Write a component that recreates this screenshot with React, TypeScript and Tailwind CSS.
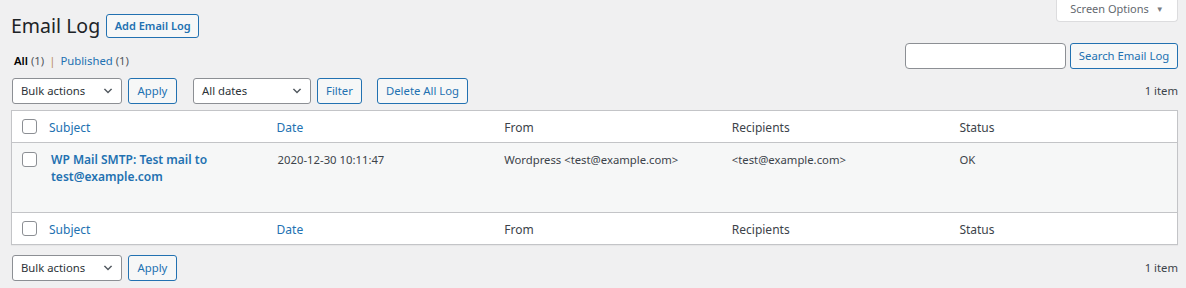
import React from "react";

const Chevron = () => (
  <svg width="12" height="12" viewBox="0 0 20 20" className="absolute right-[7px] top-1/2 -translate-y-1/2">
    <path d="M5 6l5 5 5-5 2 1-7 7-7-7 2-1z" fill="#50575e" />
  </svg>
);

const Select = ({ label, w }: { label: string; w: string }) => (
  <div className={`relative h-[26px] ${w} bg-white border border-[#8c8f94] rounded-[3px] flex items-center pl-[8px] text-[11.3px] text-[#2c3338]`}>
    {label}
    <Chevron />
  </div>
);

const Btn = ({ label, w }: { label: string; w: string }) => (
  <div className={`h-[26px] ${w} bg-[#f6f7f7] border border-[#2271b1] rounded-[3px] flex items-center justify-center text-[11.3px] text-[#2271b1]`}>
    {label}
  </div>
);

const Check = () => (
  <div className="w-[15px] h-[15px] bg-white border border-[#8c8f94] rounded-[3px]" />
);

const HeaderRow = ({ top }: { top: boolean }) => (
  <div className={`grid grid-cols-[27px_repeat(5,1fr)] h-[32px] items-center text-[12px] ${top ? "border-b border-[#c3c4c7]" : "border-t border-[#c3c4c7]"}`}>
    <div className="pl-[10px] flex items-center"><Check /></div>
    <div className="pl-[10px] pt-[3px] text-[#2271b1]">Subject</div>
    <div className="pl-[10px] pt-[3px] text-[#2271b1]">Date</div>
    <div className="pl-[10px] pt-[3px] text-[#3c434a]">From</div>
    <div className="pl-[10px] pt-[3px] text-[#3c434a]">Recipients</div>
    <div className="pl-[10px] pt-[3px] text-[#3c434a]">Status</div>
  </div>
);

export default function App() {
  return (
    <div
      className="w-[1186px] h-[288px] bg-[#f0f0f1] text-[#3c434a] overflow-hidden"
      style={{ fontFamily: '"Noto Sans", "Open Sans", sans-serif' }}
    >
      <div className="float-right mr-[8px] w-[122px] h-[22px] pb-[3px] bg-white border border-t-0 border-[#dcdcde] rounded-b-[4px] flex items-center justify-center gap-[7px] text-[11px] text-[#646970]">
        <span>Screen Options</span>
        <span className="text-[8px] text-[#787c82]">▼</span>
      </div>
      <div className="pt-[14px] pl-[11px] pr-[8px]">
        <div className="flex items-center h-[24px] gap-[6px]">
          <h1 className="text-[19.5px] leading-[24px] text-[#1d2327]">Email Log</h1>
          <div className="h-[24px] w-[93px] border border-[#2271b1] rounded-[3px] bg-[#f6f7f7] text-[11px] font-semibold text-[#2271b1] flex items-center justify-center">
            Add Email Log
          </div>
        </div>
        <div className="flex justify-between mt-[5px] h-[26px]">
          <div className="pt-[8px] pl-[3px] text-[11.3px] leading-[20px]">
            <span className="text-black font-semibold">All</span>{" "}
            <span className="text-[#50575e]">(1)</span>
            <span className="text-[#b98d5f] mx-[5px]">|</span>
            <span className="text-[#2271b1]">Published <span className="text-[#50575e]">(1)</span></span>
          </div>
          <div className="flex gap-[4px]">
            <div className="w-[161px] h-[26px] bg-white border border-[#8c8f94] rounded-[4px]" />
            <Btn label="Search Email Log" w="w-[108px]" />
          </div>
        </div>
        <div className="flex items-center mt-[9px] ml-[1px]">
          <Select label="Bulk actions" w="w-[110px]" />
          <div className="ml-[6px]"><Btn label="Apply" w="w-[49px]" /></div>
          <div className="ml-[16px]"><Select label="All dates" w="w-[118px]" /></div>
          <div className="ml-[6px]"><Btn label="Filter" w="w-[45px]" /></div>
          <div className="ml-[15px]"><Btn label="Delete All Log" w="w-[91px]" /></div>
          <div className="ml-auto text-[11.3px] text-[#3c434a]">1 item</div>
        </div>
        <div className="mt-[6px] bg-white border border-[#c3c4c7] shadow-[0_1px_1px_rgba(0,0,0,0.04)]">
          <HeaderRow top />
          <div className="grid grid-cols-[27px_repeat(5,1fr)] h-[69px] bg-[#f6f7f7] text-[11.3px] leading-[17px]">
            <div className="pl-[10px] pt-[9px]"><Check /></div>
            <div className="pl-[12px] pt-[8px] pr-[10px] text-[#2271b1] font-semibold text-[12px]">
              WP Mail SMTP: Test mail to test@example.com
            </div>
            <div className="pl-[11px] pt-[8px]">2020-12-30 10:11:47</div>
            <div className="pl-[10px] pt-[8px]">Wordpress &lt;test@example.com&gt;</div>
            <div className="pl-[10px] pt-[8px]">&lt;test@example.com&gt;</div>
            <div className="pl-[10px] pt-[8px]">OK</div>
          </div>
          <HeaderRow top={false} />
        </div>
        <div className="flex items-center mt-[10px] ml-[1px]">
          <Select label="Bulk actions" w="w-[110px]" />
          <div className="ml-[6px]"><Btn label="Apply" w="w-[49px]" /></div>
          <div className="ml-auto text-[11.3px] text-[#3c434a]">1 item</div>
        </div>
      </div>
    </div>
  );
}
